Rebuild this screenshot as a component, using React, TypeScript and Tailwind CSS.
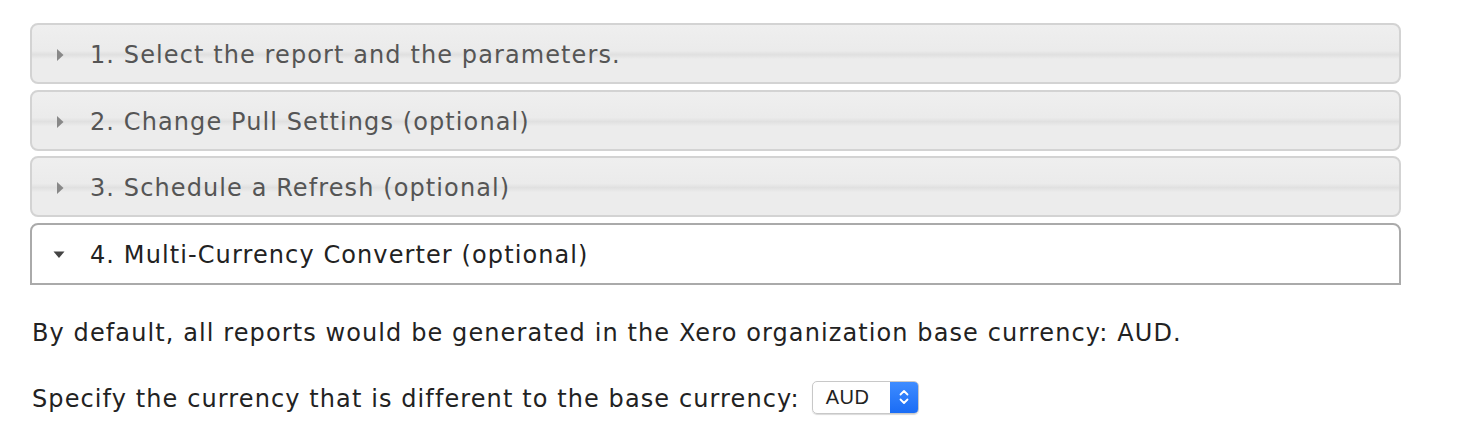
const sections = [
  "1. Select the report and the parameters.",
  "2. Change Pull Settings (optional)",
  "3. Schedule a Refresh (optional)",
];

function Caret({ open }: { open?: boolean }) {
  return open ? (
    <svg width="12" height="8" viewBox="0 0 12 8" className="shrink-0">
      <path d="M0.5 0.5h11L6 7z" fill="#444" />
    </svg>
  ) : (
    <svg width="8" height="14" viewBox="0 0 8 14" className="shrink-0">
      <path d="M1 1v12l6.5-6z" fill="#888" />
    </svg>
  );
}

export default function App() {
  return (
    <div className="min-h-[444px] bg-white pt-[23px] pl-[30px] font-['DejaVu_Sans',Verdana,sans-serif] text-[24px] tracking-[1.1px]">
      <div className="flex w-[1371px] flex-col gap-[5.5px]">
        {sections.map((s) => (
          <div
            key={s}
            className="flex h-[61px] items-center rounded-[8px] border-2 border-[#d3d3d3] bg-[linear-gradient(#efefef_0%,#ebebeb_45%,#e0e0e0_52%,#ececec_60%,#ececec_100%)] pt-[3px] pl-[24px] text-[#555555]"
          >
            <div className="flex w-[34px] items-center">
              <Caret />
            </div>
            <span>{s}</span>
          </div>
        ))}
        <div className="flex h-[62px] items-center rounded-t-[8px] border-2 border-[#aaaaaa] bg-white pt-[3px] pl-[21px] text-[#222222]">
          <div className="flex w-[37px] items-center">
            <Caret open />
          </div>
          <span>4. Multi-Currency Converter (optional)</span>
        </div>
      </div>
      <div className="pl-[2px] text-[#222222]">
        <p className="mt-[30px]">By default, all reports would be generated in the Xero organization base currency: AUD.</p>
        <div className="mt-[30px] flex items-center">
          <span>Specify the currency that is different to the base currency:</span>
          <div className="ml-[12px] -mt-[3px] flex h-[33px] w-[107px] overflow-hidden rounded-[5px] border border-[#c8c8c8] shadow-[0_1px_1px_rgba(0,0,0,0.15)]">
            <span className="flex flex-1 items-center pl-[13px] font-['Liberation_Sans',Arial,sans-serif] text-[20px] tracking-[0.5px] text-[#222]">AUD</span>
            <span className="flex w-[28px] items-center justify-center bg-[linear-gradient(#3e8cff,#1a6cf5)]">
              <svg width="12" height="20" viewBox="0 0 12 20">
                <path d="M2.5 7.5l3.5-3.5 3.5 3.5M2.5 12.5l3.5 3.5 3.5-3.5" fill="none" stroke="#fff" strokeWidth="1.8" strokeLinecap="round" strokeLinejoin="round" />
              </svg>
            </span>
          </div>
        </div>
      </div>
    </div>
  );
}
